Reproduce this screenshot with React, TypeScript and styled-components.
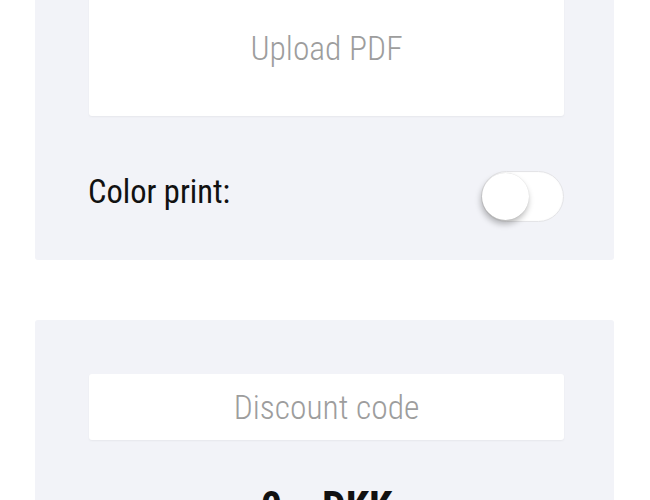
import React, { useState } from "react";
import styled, { createGlobalStyle } from "styled-components";

const GlobalStyle = createGlobalStyle`
  html, body { margin: 0; padding: 0; background: #ffffff; overflow: hidden; }
  body { font-family: "Roboto Condensed", "Open Sans", sans-serif; }
  * { box-sizing: border-box; }
`;

const Page = styled.main`
  width: 650px;
  margin-top: -74px;
  padding: 0 36px 0 35px;
  display: flex;
  flex-direction: column;
  gap: 60px;
`;

const Card = styled.section`
  background: #f2f3f8;
  border-radius: 3px;
  padding: 54px 50px 38px 54px;
  display: flex;
  flex-direction: column;
`;

const Box = styled.div<{ $h: number }>`
  height: ${(p) => p.$h}px;
  width: 475px;
  background: #ffffff;
  border-radius: 3px;
  box-shadow: 0 1px 2px rgba(0, 0, 0, 0.05);
  display: flex;
  align-items: center;
  justify-content: center;
`;

const Placeholder = styled.span`
  font-size: 33.5px;
  font-weight: 300;
  color: #9d9d9d;
`;

const Row = styled.div`
  margin-top: 55px;
  width: 475px;
  display: flex;
  align-items: center;
  justify-content: space-between;
`;

const Label = styled.span`
  font-size: 32.5px;
  font-weight: 400;
  color: #111111;
  margin-left: -1px;
  margin-top: -10px;
`;

const Track = styled.button<{ $on: boolean }>`
  width: 83px;
  height: 51px;
  border-radius: 26px;
  border: 1px solid #e4e4e7;
  background: ${(p) => (p.$on ? "#4cd964" : "#ffffff")};
  padding: 0;
  position: relative;
  cursor: pointer;
  box-shadow: inset 0 0 2px rgba(0, 0, 0, 0.04);
`;

const Knob = styled.span<{ $on: boolean }>`
  position: absolute;
  top: 1px;
  left: ${(p) => (p.$on ? "33px" : "0px")};
  width: 47px;
  height: 47px;
  border-radius: 50%;
  background: #ffffff;
  box-shadow: -1px 4px 6px rgba(0, 0, 0, 0.28), 0 0 1px rgba(0, 0, 0, 0.15);
`;

const Total = styled.div`
  margin-top: 46px;
  width: 475px;
  text-align: center;
  font-size: 42px;
  font-weight: 700;
  color: #111111;
  line-height: 1;
  word-spacing: 5px;
`;

export default function App() {
  const [on, setOn] = useState(false);
  return (
    <>
      <GlobalStyle />
      <Page>
        <Card>
          <Box $h={136}>
            <Placeholder>Upload PDF</Placeholder>
          </Box>
          <Row>
            <Label>Color print:</Label>
            <Track $on={on} onClick={() => setOn(!on)} aria-label="Color print">
              <Knob $on={on} />
            </Track>
          </Row>
        </Card>
        <Card>
          <Box $h={66}>
            <Placeholder>Discount code</Placeholder>
          </Box>
          <Total>0,- DKK</Total>
        </Card>
      </Page>
    </>
  );
}
